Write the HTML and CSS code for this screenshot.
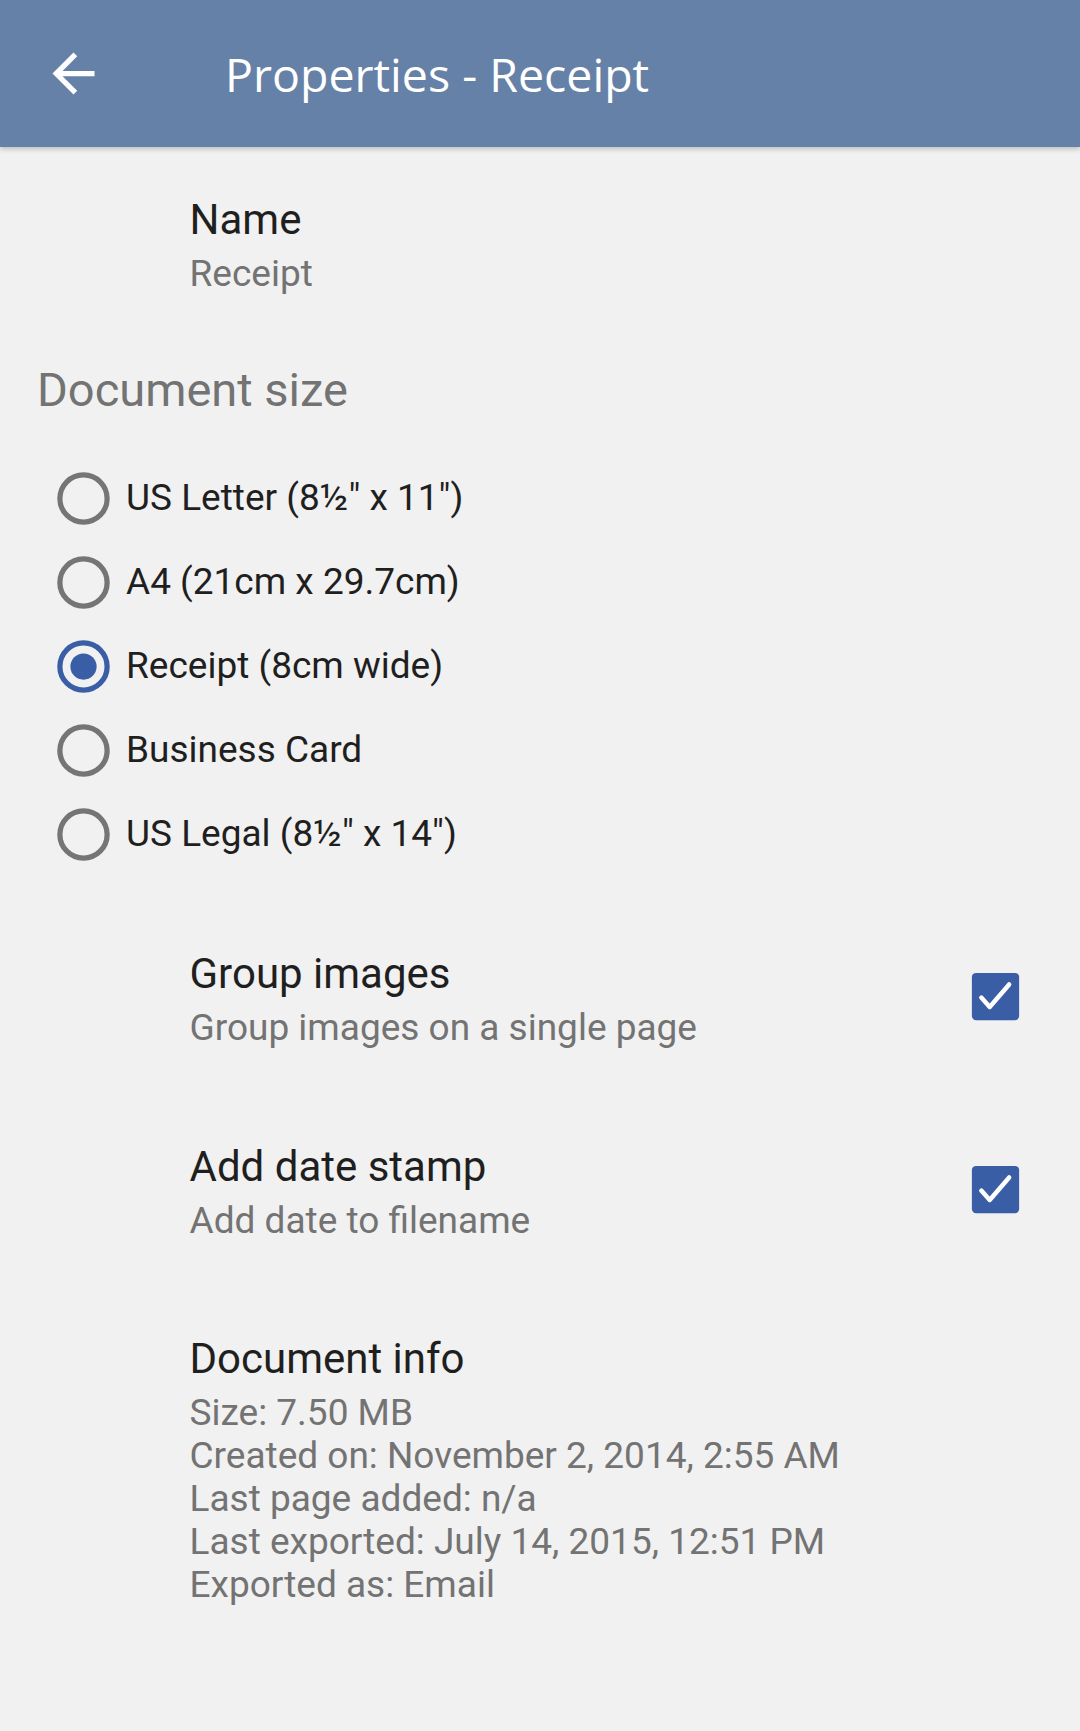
FILE: index.html
```html
<!DOCTYPE html>
<html lang="en">
<head>
<meta charset="utf-8">
<title>Properties - Receipt</title>
<link rel="stylesheet" href="styles.css">
</head>
<body>
<div class="app">
  <header class="appbar">
    <div class="back">
      <svg viewBox="0 0 24 24" width="63" height="63"><path fill="#ffffff" d="M20 11H7.83l5.59-5.59L12 4l-8 8 8 8 1.41-1.41L7.83 13H20v-2z"/></svg>
    </div>
    <h1 class="title">Properties - Receipt</h1>
  </header>

  <main class="content">
    <section class="pref pref-name">
      <div class="pref-text">
        <div class="pref-title">Name</div>
        <div class="pref-sub">Receipt</div>
      </div>
    </section>

    <h2 class="category">Document size</h2>

    <ul class="radios">
      <li class="radio-row">
        <svg class="radio" viewBox="0 0 24 24" width="63" height="63"><circle cx="12" cy="12" r="9" fill="none" stroke="#757575" stroke-width="2"/></svg>
        <span class="radio-label">US Letter (8½" x 11")</span>
      </li>
      <li class="radio-row">
        <svg class="radio" viewBox="0 0 24 24" width="63" height="63"><circle cx="12" cy="12" r="9" fill="none" stroke="#757575" stroke-width="2"/></svg>
        <span class="radio-label">A4 (21cm x 29.7cm)</span>
      </li>
      <li class="radio-row">
        <svg class="radio" viewBox="0 0 24 24" width="63" height="63"><circle cx="12" cy="12" r="9" fill="none" stroke="#3a5ea6" stroke-width="2"/><circle cx="12" cy="12" r="5" fill="#3a5ea6"/></svg>
        <span class="radio-label">Receipt (8cm wide)</span>
      </li>
      <li class="radio-row">
        <svg class="radio" viewBox="0 0 24 24" width="63" height="63"><circle cx="12" cy="12" r="9" fill="none" stroke="#757575" stroke-width="2"/></svg>
        <span class="radio-label">Business Card</span>
      </li>
      <li class="radio-row">
        <svg class="radio" viewBox="0 0 24 24" width="63" height="63"><circle cx="12" cy="12" r="9" fill="none" stroke="#757575" stroke-width="2"/></svg>
        <span class="radio-label">US Legal (8½" x 14")</span>
      </li>
    </ul>

    <section class="pref pref-check pref-group">
      <div class="pref-text">
        <div class="pref-title">Group images</div>
        <div class="pref-sub">Group images on a single page</div>
      </div>
      <svg class="check" viewBox="0 0 24 24" width="63" height="63"><rect x="3" y="3" width="18" height="18" rx="1.6" fill="#3a5ea6"/><path d="M6.6 12.4l3.2 3.6 7.4-8.6" fill="none" stroke="#ffffff" stroke-width="1.7" stroke-linecap="round" stroke-linejoin="round"/></svg>
    </section>

    <section class="pref pref-check pref-date">
      <div class="pref-text">
        <div class="pref-title">Add date stamp</div>
        <div class="pref-sub">Add date to filename</div>
      </div>
      <svg class="check" viewBox="0 0 24 24" width="63" height="63"><rect x="3" y="3" width="18" height="18" rx="1.6" fill="#3a5ea6"/><path d="M6.6 12.4l3.2 3.6 7.4-8.6" fill="none" stroke="#ffffff" stroke-width="1.7" stroke-linecap="round" stroke-linejoin="round"/></svg>
    </section>

    <section class="pref pref-info">
      <div class="pref-text">
        <div class="pref-title">Document info</div>
        <div class="info-lines">
          <div>Size: 7.50 MB</div>
          <div>Created on: November 2, 2014, 2:55 AM</div>
          <div>Last page added: n/a</div>
          <div>Last exported: July 14, 2015, 12:51 PM</div>
          <div>Exported as: Email</div>
        </div>
      </div>
    </section>
  </main>
</div>
</body>
</html>
```

FILE: styles.css
```css
* { box-sizing: border-box; }

html, body {
  margin: 0;
  padding: 0;
  background: #f1f1f1;
}

body {
  font-family: Roboto, "Liberation Sans", Arial, sans-serif;
  width: 1080px;
  height: 1731px;
  overflow: hidden;
}

.app {
  display: flex;
  flex-direction: column;
  min-height: 1731px;
}

.appbar {
  height: 147px;
  background: #6681a7;
  display: flex;
  align-items: center;
  padding-left: 42px;
  box-shadow: 0 2px 5px rgba(0, 0, 0, 0.22);
  position: relative;
  z-index: 1;
}

.back {
  width: 63px;
  height: 63px;
  display: flex;
}

.title {
  margin: 0 0 0 120px;
  font-family: "Open Sans", "Noto Sans", sans-serif;
  font-weight: 400;
  font-size: 46.5px;
  line-height: 64px;
  color: #ffffff;
}

.content {
  display: flex;
  flex-direction: column;
}

.pref {
  display: flex;
  align-items: center;
  padding-left: 189.5px;
  padding-right: 53px;
}

.pref-text {
  flex: 1;
  display: flex;
  flex-direction: column;
}

.pref-title {
  font-size: 42px;
  line-height: 52px;
  color: #1f1f1f;
}

.pref-sub {
  font-size: 37px;
  line-height: 56px;
  color: #737373;
}

.pref-name {
  margin-top: 47px;
}

.category {
  margin: 58px 0 0 0;
  padding-left: 37px;
  font-weight: 400;
  font-size: 47px;
  line-height: 60px;
  color: #737373;
}

.radios {
  list-style: none;
  margin: 36px 0 0 0;
  padding: 0;
  display: flex;
  flex-direction: column;
}

.radio-row {
  height: 84px;
  display: flex;
  align-items: center;
  padding-left: 52px;
}

.radio {
  flex: none;
}

.radio-label {
  margin-left: 11px;
  font-size: 37px;
  line-height: 84px;
  color: #1f1f1f;
}

.pref-check .pref-sub {
  line-height: 56px;
}

.check {
  flex: none;
}

.pref-group {
  margin-top: 72px;
}

.pref-group .check,
.pref-date .check {
  margin-top: -11px;
}

.pref-date {
  margin-top: 85px;
}

.pref-info {
  margin-top: 84px;
}

.info-lines {
  margin-top: 6px;
  font-size: 37px;
  line-height: 43px;
  color: #737373;
}
```
